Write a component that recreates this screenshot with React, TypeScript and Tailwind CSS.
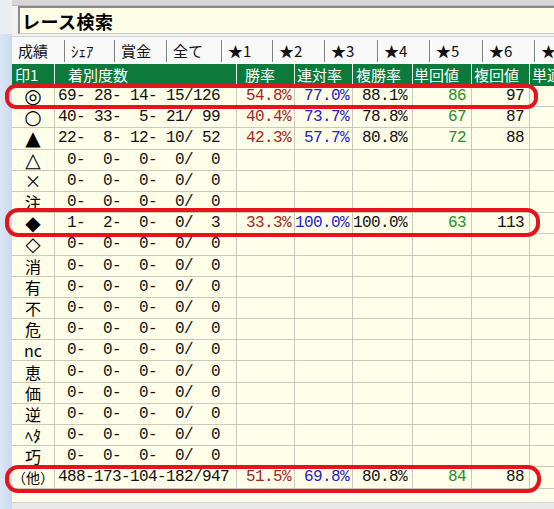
import React from "react";

type Row = {
  mark: string;
  counts: string;
  win?: string;
  place2?: string;
  place3?: string;
  winRet?: string;
  placeRet?: string;
};

const ZERO = " 0-  0-  0-  0/  0";

const rows: Row[] = [
  { mark: "◎", counts: "69- 28- 14- 15/126", win: "54.8%", place2: "77.0%", place3: "88.1%", winRet: "86", placeRet: "97" },
  { mark: "○", counts: "40- 33-  5- 21/ 99", win: "40.4%", place2: "73.7%", place3: "78.8%", winRet: "67", placeRet: "87" },
  { mark: "▲", counts: "22-  8- 12- 10/ 52", win: "42.3%", place2: "57.7%", place3: "80.8%", winRet: "72", placeRet: "88" },
  { mark: "△", counts: ZERO },
  { mark: "×", counts: ZERO },
  { mark: "注", counts: ZERO },
  { mark: "◆", counts: " 1-  2-  0-  0/  3", win: "33.3%", place2: "100.0%", place3: "100.0%", winRet: "63", placeRet: "113" },
  { mark: "◇", counts: ZERO },
  { mark: "消", counts: ZERO },
  { mark: "有", counts: ZERO },
  { mark: "不", counts: ZERO },
  { mark: "危", counts: ZERO },
  { mark: "nc", counts: ZERO },
  { mark: "恵", counts: ZERO },
  { mark: "価", counts: ZERO },
  { mark: "逆", counts: ZERO },
  { mark: "ﾍﾀ", counts: ZERO },
  { mark: "巧", counts: ZERO },
  { mark: "（他）", counts: "488-173-104-182/947", win: "51.5%", place2: "69.8%", place3: "80.8%", winRet: "84", placeRet: "88" },
];

const SHAPES = "◎○▲△◆◇";

const tabs = [
  { label: "成績", w: "w-[53px]" },
  { label: "ｼｪｱ", w: "w-[50px]" },
  { label: "賞金", w: "w-[52px]" },
  { label: "全て", w: "w-[55px]" },
  { label: "★1", w: "w-[51px]" },
  { label: "★2", w: "w-[52px]" },
  { label: "★3", w: "w-[53px]" },
  { label: "★4", w: "w-[52px]" },
  { label: "★5", w: "w-[53px]" },
  { label: "★6", w: "w-[52px]" },
  { label: "★", w: "w-[52px]" },
];

const jp = "font-['Noto_Sans_CJK_JP',sans-serif]";
const shapeFont = "font-['DejaVu_Sans',sans-serif] text-[20px] leading-[18px]";
const mono = "block font-['Liberation_Mono',monospace] text-[16px] tracking-[-0.6px] leading-[16px]";
const head = `block ${jp} text-[15px] leading-[16px] whitespace-nowrap`;

const cell = "h-full shrink-0 border-r border-[#c9c9bd] flex items-center";

function markClass(mark: string) {
  if (SHAPES.includes(mark)) return shapeFont;
  if (mark.length > 2) return `${jp} text-[14px] leading-[18px]`;
  if (mark === "×") return `${jp} text-[17px] leading-[18px]`;
  return `${jp} text-[16px] leading-[18px]`;
}

export default function App() {
  return (
    <div className="relative w-[554px] h-[509px] overflow-hidden bg-[#f1f1f1] flex">
      {/* window edge on the left */}
      <div className="w-[12px] shrink-0 flex flex-col">
        <div className="h-[34px] bg-[#e9ecf0]" />
        <div className="flex-1 bg-gradient-to-r from-[#dbe6f4] to-[#c9daf0]" />
      </div>

      <div className="flex-1 min-w-0 flex flex-col">
        {/* top strip */}
        <div className="h-[6px] bg-[#d6d6d6] border-b border-[#bdbdbd]" />

        {/* title box */}
        <div className="h-[28px] ml-[6px] bg-[#fdfce4] border-t-2 border-l-2 border-[#8a8a8a] border-b border-b-[#c8c8c8] flex items-center pl-[2px]">
          <span className={`block ${jp} text-[18px] font-bold leading-[20px] text-black tracking-[0.5px]`}>レース検索</span>
        </div>

        {/* tab strip */}
        <div className="h-[28px] mt-[2px] bg-[#f8f8f8] border-t border-[#d0d0d0] flex items-center overflow-hidden">
          {tabs.map((t) => (
            <div
              key={t.label}
              className={`${t.w} shrink-0 h-[22px] flex items-center pl-[6px] border-r border-[#7f7f7f] shadow-[1px_0_0_#ffffff]`}
            >
              <span className={`block ${jp} text-[15px] leading-[16px] text-[#111] whitespace-nowrap`}>{t.label}</span>
            </div>
          ))}
        </div>

        {/* results table */}
        <div className="flex-1 bg-[#fffee9] flex flex-col overflow-hidden">
          <div className="h-[22px] shrink-0 flex bg-[#0b7a3b] text-white">
            <div className={`${cell} w-[43px] border-[#e8f0e8] pl-[3px]`}>
              <span className={head}>印1</span>
            </div>
            <div className={`${cell} w-[182px] border-[#e8f0e8] pl-[13px]`}>
              <span className={head}>着別度数</span>
            </div>
            <div className={`${cell} w-[58px] border-[#e8f0e8] pl-[8px]`}>
              <span className={head}>勝率</span>
            </div>
            <div className={`${cell} w-[58px] border-[#e8f0e8] pl-[2px]`}>
              <span className={head}>連対率</span>
            </div>
            <div className={`${cell} w-[60px] border-[#e8f0e8] pl-[3px]`}>
              <span className={head}>複勝率</span>
            </div>
            <div className={`${cell} w-[59px] border-[#e8f0e8] pl-[1px]`}>
              <span className={head}>単回値</span>
            </div>
            <div className={`${cell} w-[58px] border-[#e8f0e8] pl-[2px]`}>
              <span className={head}>複回値</span>
            </div>
            <div className={`${cell} w-[59px] border-[#e8f0e8] pl-[2px]`}>
              <span className={head}>単適</span>
            </div>
          </div>

          {rows.map((r, i) => (
            <div key={i} className="h-[21.2px] shrink-0 flex border-b border-[#c9c9bd]">
              <div className={`${cell} w-[43px] justify-center`}>
                <span className={`block ${markClass(r.mark)} text-black whitespace-nowrap`}>{r.mark}</span>
              </div>
              <div className={`${cell} w-[182px] pl-[3px]`}>
                <span className={`${mono} text-[#111] whitespace-pre`}>{r.counts}</span>
              </div>
              <div className={`${cell} w-[58px] justify-end pr-[3px]`}>
                <span className={`${mono} text-[#a52424]`}>{r.win}</span>
              </div>
              <div className={`${cell} w-[58px] justify-end pr-[3px]`}>
                <span className={`${mono} text-[#2222cc]`}>{r.place2}</span>
              </div>
              <div className={`${cell} w-[60px] justify-end pr-[5px]`}>
                <span className={`${mono} text-[#111]`}>{r.place3}</span>
              </div>
              <div className={`${cell} w-[59px] justify-end pr-[5px]`}>
                <span className={`${mono} text-[#24902a]`}>{r.winRet}</span>
              </div>
              <div className={`${cell} w-[58px] justify-end pr-[5px]`}>
                <span className={`${mono} text-[#111]`}>{r.placeRet}</span>
              </div>
              <div className={`${cell} w-[59px]`} />
            </div>
          ))}

          <div className="flex-1" />
          <div className="h-[7px] shrink-0 bg-[#e9e9e9] border-t border-[#d6d6d6]" />
        </div>
      </div>

      {/* red highlight marks drawn over the rows */}
      <div className="absolute left-[5px] top-[84px] w-[533px] h-[25px] border-[4px] border-[#e3141c] rounded-[11px]" />
      <div className="absolute left-[5px] top-[208px] w-[535px] h-[29px] border-[4px] border-[#e3141c] rounded-[13px]" />
      <div className="absolute left-[5px] top-[465px] w-[536px] h-[28px] border-[4px] border-[#e3141c] rounded-[13px]" />
    </div>
  );
}
